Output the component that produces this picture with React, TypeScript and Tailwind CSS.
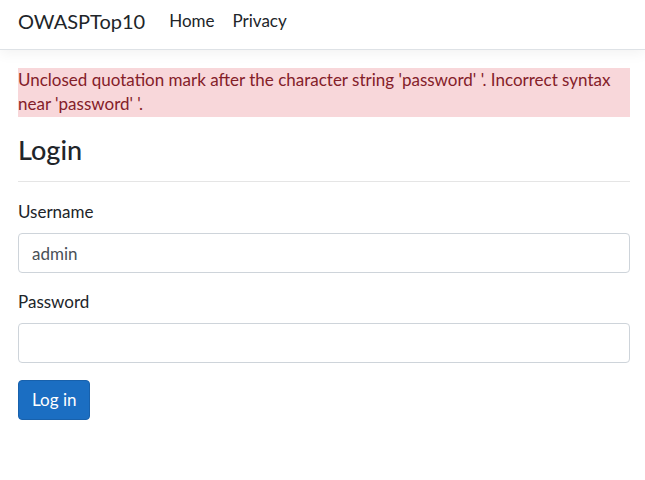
export default function App() {
    return (
        <div className="min-h-screen bg-white text-[#212529] font-['Segoe_UI','Lato',sans-serif] text-[17px] leading-[24px]">
            <header className="h-[50px] border-b border-[#dee2e6] bg-white shadow-[0_4px_12px_rgba(0,0,0,0.05)]">
                <nav className="flex items-center pl-[18px] pr-[15px] pt-[6px]">
                    <a className="mr-4 text-[20px] leading-[30px] text-[#212529]">OWASPTop10</a>
                    <a className="pl-[8px] pr-[9px] text-[#212529]">Home</a>
                    <a className="px-[9px] text-[#212529]">Privacy</a>
                </nav>
            </header>

            <main className="pl-[18px] pr-[15px] pt-[18px]">
                <div className="bg-[#f8d7da] text-[#842029] pb-[1px]">
                    Unclosed quotation mark after the character string 'password' '. Incorrect syntax near 'password' '.
                </div>

                <h4 className="mt-[17px] text-[27px] leading-[32px] font-medium">Login</h4>
                <hr className="mt-[15px] border-t border-[#e5e5e5]" />

                <form className="mt-[18px]">
                    <div className="mb-[17px]">
                        <label className="block mb-[9px]">Username</label>
                        <input
                            defaultValue="admin"
                            className="block h-[40px] w-full rounded-[4px] border border-[#ced4da] px-[13px] text-[17px] text-[#495057] outline-none"
                        />
                    </div>
                    <div className="mb-[17px]">
                        <label className="block mb-[9px]">Password</label>
                        <input
                            type="password"
                            className="block h-[40px] w-full rounded-[4px] border border-[#ced4da] px-[13px] outline-none"
                        />
                    </div>
                    <button
                        type="button"
                        className="h-[40px] rounded-[4px] border border-[#1861ac] bg-[#1b6ec2] px-[13px] text-[17px] text-white"
                    >
                        Log in
                    </button>
                </form>
            </main>
        </div>
    );
}
